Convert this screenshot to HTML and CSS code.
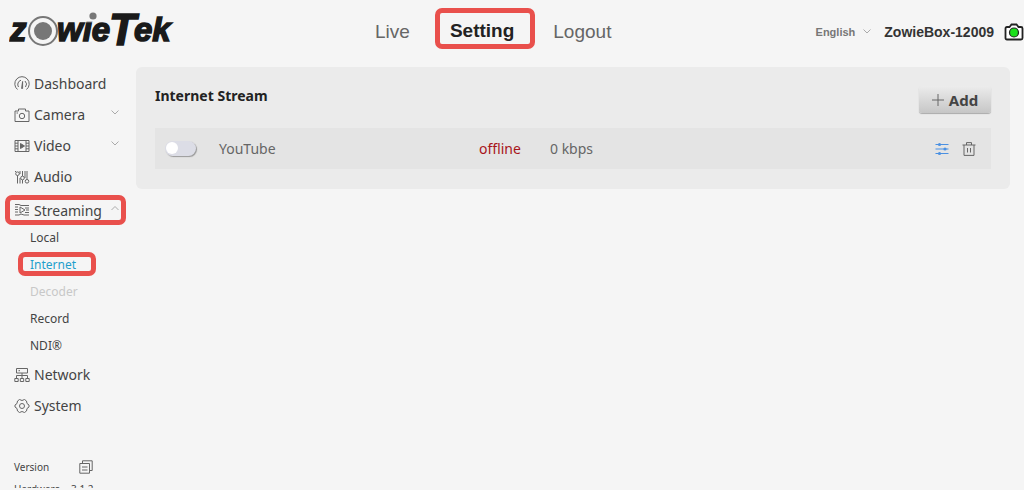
FILE: index.html
```html
<!DOCTYPE html>
<html lang="en">

<head>
    <meta charset="utf-8">
    <title>ZowieTek</title>
    <link rel="stylesheet" href="styles.css">
</head>

<body>
    <header class="header">
        <a class="logo" href="#" aria-label="ZowieTek">
            <svg width="180" height="52" viewBox="0 -7 180 52">
                <g class="logo-text">
                    <text x="1" y="30" font-size="33">z</text>
                    <text x="48" y="30" font-size="33">wie</text>
                    <text x="100" y="34" font-size="44">T</text>
                    <text x="125" y="30" font-size="33">ek</text>
                </g>
                <circle cx="34" cy="20" r="14" fill="#f5f5f5" stroke="#777" stroke-width="2" />
                <circle cx="34" cy="20" r="9" fill="#777" stroke="none" />
                <path d="M77 1H90V10H77Z" fill="#f5f5f5" stroke="none" />
                <circle cx="84" cy="5" r="3.600" fill="#777" stroke="none" />
            </svg>
        </a>
        <nav class="topnav">
            <a href="#">Live</a>
            <a href="#" class="active marked">Setting</a>
            <a href="#">Logout</a>
        </nav>
        <div class="device">
            <button class="lang" type="button">English
                <svg class="arrow" width="8" height="5" viewBox="0 0 8 5"><path d="M.5 .5L4 4L7.500 .5" /></svg>
            </button>
            <span class="device-name">ZowieBox-12009</span>
            <svg class="snapshot" width="20" height="18" viewBox="0 0 20 18">
                <path d="M3 4H5.500L7.500 1.500H12.500L14.500 4H17Q18.500 4 18.500 5.500V15Q18.500 16.500 17 16.500H3Q1.500 16.500 1.500 15V5.500Q1.500 4 3 4Z" fill="#fff" stroke="#222" stroke-width="1.800" />
                <circle cx="10" cy="9.500" r="4.500" fill="#1be01b" stroke="#222" stroke-width="1.200" />
            </svg>
        </div>
    </header>

    <div class="content">
        <aside class="sidebar">
            <ul class="menu">
                <li><a href="#">
                    <svg class="icon" viewBox="0 0 16 16"><path d="M3.500 13.500A7.200 7.200 0 1 1 12.500 13.500M4.500 11A4.500 4.500 0 0 1 7 4.200M11 5A4.500 4.500 0 0 1 11.500 11M7.600 12.500L8.600 5.500V12.500Z" /></svg>
                    Dashboard</a></li>
                <li><a href="#">
                    <svg class="icon" viewBox="0 0 16 16"><path d="M1 4H4.500V2H11.500V4H15V14.500H1Z" /><circle cx="8" cy="9" r="2.700" /><path d="M2.500 6H4" /></svg>
                    Camera
                    <svg class="arrow" width="8" height="5" viewBox="0 0 8 5"><path d="M.5 .5L4 4L7.500 .5" /></svg></a></li>
                <li><a href="#">
                    <svg class="icon" viewBox="0 0 16 16"><path d="M1 2.500H15V13.500H1ZM4 2.500V13.500M12 2.500V13.500M1 5.200H4M1 8H4M1 10.800H4M12 5.200H15M12 8H15M12 10.800H15" /><path d="M6.500 5.500L10.500 8L6.500 10.500Z" fill="#666" /></svg>
                    Video
                    <svg class="arrow" width="8" height="5" viewBox="0 0 8 5"><path d="M.5 .5L4 4L7.500 .5" /></svg></a></li>
                <li><a href="#">
                    <svg class="icon" viewBox="0 0 16 16"><path d="M3.500 6.500V14.500M8.500 2V7M8.500 11V14.500M13 2V10.500M1.500 2V3M6 9V14.500M6 2V5M11 2V9" /><circle cx="3.500" cy="4.700" r="1.800" /><circle cx="8.500" cy="9" r="1.800" /><circle cx="13" cy="12.300" r="1.800" /></svg>
                    Audio</a></li>
                <li><a href="#" class="marked">
                    <svg class="icon" viewBox="0 0 16 16"><path d="M1 2.500H5L7 3.500H15M1 5H4M11 6H15M1 7.500H4M12 8H15M1 10H4M11 10.500H15M1 13H5L7 12L10 13H15M6 5L11 8L6 11Z" /></svg>
                    Streaming
                    <svg class="arrow" width="8" height="5" viewBox="0 0 8 5"><path d="M.5 4L4 .5L7.500 4" /></svg></a>
                    <ul class="submenu">
                        <li><a href="#">Local</a></li>
                        <li><a href="#" class="current marked">Internet</a></li>
                        <li><a href="#" class="disabled">Decoder</a></li>
                        <li><a href="#">Record</a></li>
                        <li><a href="#">NDI®</a></li>
                    </ul>
                </li>
                <li><a href="#">
                    <svg class="icon" viewBox="0 0 16 16"><path d="M2.500 1.500H13.500V6H2.500ZM4.500 3.700H6M8 6V11.500M2.500 11.500V8.500H13.500V11.500M.8 11.500H4.200V14.500H.8ZM6.300 11.500H9.700V14.500H6.300ZM11.800 11.500H15.200V14.500H11.800Z" /></svg>
                    Network</a></li>
                <li><a href="#">
                    <svg class="icon" viewBox="0 0 16 16"><path d="M5.500 1.500L8 2.500L10.500 1.500L12.500 3L13 5.500L15 7V9L13 10.500L12.500 13L10.500 14.500L8 13.500L5.500 14.500L3.500 13L3 10.500L1 9V7L3 5.500L3.500 3Z" /><circle cx="8" cy="8" r="2.500" /></svg>
                    System</a></li>
            </ul>
            <div class="version">
                <span>Version</span>
                <button class="icon-btn" type="button" aria-label="Copy">
                    <svg width="14" height="14" viewBox="0 0 14 14"><path d="M3.500 3.500V.8H13.200V10.500H10.500M.8 3.500H10.500V13.200H.8ZM3 7H8.500M3 10H8.500" /></svg>
                </button>
                <span>Hardware</span>
                <span class="number">3.1.2</span>
            </div>
        </aside>

        <main class="card">
            <div class="card-head">
                <h2>Internet Stream</h2>
                <button class="add" type="button">
                    <svg width="12" height="12" viewBox="0 0 12 12"><path d="M6 0V12M0 6H12" /></svg>
                    Add
                </button>
            </div>
            <table class="streams">
                <tr>
                    <td class="col-switch"><input class="switch" type="checkbox" aria-label="Enable YouTube"></td>
                    <td class="col-name">YouTube</td>
                    <td class="col-status">offline</td>
                    <td>0 kbps</td>
                    <td class="col-tools">
                        <div class="tools">
                            <button class="icon-btn edit" type="button" aria-label="Edit">
                                <svg width="14" height="14" viewBox="0 0 14 14"><path d="M.5 2.500H13.500M.5 7H13.500M.5 11.500H13.500" /><g fill="#4a90e2" stroke="none"><circle cx="4.500" cy="2.500" r="1.600" /><circle cx="10" cy="7" r="1.600" /><circle cx="4.500" cy="11.500" r="1.600" /></g></svg>
                            </button>
                            <button class="icon-btn" type="button" aria-label="Delete">
                                <svg width="14" height="14" viewBox="0 0 14 14"><path d="M.5 3H13.500M4.500 3V.6H9.500V3M2 3V13.400H12V3M5.500 6V10.500M8.500 6V10.500" /></svg>
                            </button>
                        </div>
                    </td>
                </tr>
            </table>
        </main>
    </div>
</body>

</html>
```

FILE: styles.css
```css
* {
    box-sizing: border-box;
}

body {
    display: flex;
    flex-direction: column;
    height: calc(100vh - 2px);
    margin: 0;
    overflow: hidden;
    background: #f5f5f5;
    color: #444;
    font-family: "Noto Sans", "Open Sans", sans-serif;
}

a {
    color: inherit;
    text-decoration: none;
}

button {
    padding: 0;
    border: 0;
    background: none;
    color: inherit;
    font: inherit;
    cursor: pointer;
}

ul {
    margin: 0;
    padding: 0;
    list-style: none;
}

svg {
    flex: none;
    fill: none;
    stroke: #666;
}

/* header */
.header {
    display: grid;
    grid-template-columns: 10fr auto 11fr;
    align-items: center;
    flex: none;
    height: 56px;
    padding-top: 1px;
    font-family: "Liberation Sans", Arial, sans-serif;
}

.logo {
    height: 52px;
    margin: 2px 0 0 9px;
}

.logo-text {
    fill: #1a1a1a;
    stroke: #1a1a1a;
    stroke-width: 1.5;
    font-weight: bold;
    font-style: italic;
}

.topnav {
    display: flex;
    align-items: center;
    gap: 18px;
    padding-bottom: 1px;
    font-size: 19px;
    color: #666;
}

.topnav a {
    padding-top: 6px;
    line-height: 31px;
}

.topnav .active {
    margin-left: 7px;
    padding: 4px 16px 0 10px;
    line-height: 27px;
    color: #222;
    font-weight: bold;
}

.marked {
    border: 5px solid #e9504c;
    border-radius: 7px;
}

.device {
    display: flex;
    align-items: center;
    justify-content: flex-end;
    padding: 6px 0 0;
    font-weight: bold;
}

.lang {
    display: flex;
    align-items: center;
    gap: 8px;
    margin-right: 13px;
    color: #777;
    font-size: 11px;
}

.arrow {
    stroke: #aaa;
}

.device-name {
    margin-right: 10px;
    color: #333;
    font-size: 14px;
}

.content {
    display: flex;
    flex: 1;
    min-height: 0;
}

/* left menu */
.sidebar {
    flex: none;
    width: 136px;
    padding-top: 12px;
}

.menu a {
    display: flex;
    align-items: center;
    height: 31px;
    margin: 0 10px 0 5px;
    padding: 0 5px 0 9px;
    font-size: 14px;
}

.menu .icon {
    width: 16px;
    height: 16px;
    margin-right: 4px;
}

.menu .arrow {
    margin: 0 2px 4px auto;
}

.menu > li > .marked {
    height: 30px;
    margin-top: 3px;
    padding: 0 0 0 4px;
}

.menu .submenu {
    display: grid;
    gap: 3px;
    margin-bottom: 2px;
}

.menu .submenu a {
    height: 24px;
    margin: 0 40px 0 18px;
    padding: 0 0 0 12px;
    font-size: 12px;
}

.menu .submenu .marked {
    padding-left: 7px;
}

.submenu .current {
    color: #1e9fcc;
}

.submenu .disabled {
    color: #c8c8c8;
}

.version {
    display: grid;
    grid-template-columns: 56px auto;
    grid-auto-rows: 22px;
    align-items: center;
    justify-content: start;
    gap: 0 9px;
    margin: 35px 0 0 14px;
    font-size: 10px;
}

.version .number {
    margin-left: -8px;
}

.icon-btn {
    display: flex;
}

/* streams card */
.card {
    flex: 1;
    align-self: flex-start;
    margin: 11px 14px 0 0;
    padding: 19px 19px 20px;
    border-radius: 6px;
    background: #ebebeb;
}

.card-head {
    display: flex;
    align-items: flex-start;
    justify-content: space-between;
    height: 42px;
}

h2 {
    margin: 0;
    color: #222;
    font-size: 14px;
    line-height: 20px;
}

.add {
    display: flex;
    align-items: center;
    justify-content: center;
    gap: 5px;
    width: 72px;
    height: 27px;
    border-radius: 3px;
    background: linear-gradient(#ececec, #c6c6c6);
    box-shadow: 0 1px 1px #aaa;
    font-size: 15px;
    font-weight: bold;
}

.streams {
    width: 100%;
    border-collapse: collapse;
    background: #e4e4e4;
    color: #666;
    font-size: 14px;
}

.streams td {
    height: 41px;
    padding: 0;
}

.streams .col-switch {
    width: 64px;
    padding-left: 10px;
}

.col-name {
    width: 260px;
}

.streams .col-status {
    width: 71px;
    color: #a8141b;
}

.switch {
    display: block;
    appearance: none;
    width: 31px;
    height: 15px;
    margin: 0;
    border-radius: 8px;
    background: #dcdde6;
    box-shadow: 1px 1px 1px #999;
}

.switch::before {
    content: "";
    display: block;
    width: 12px;
    height: 12px;
    margin: 1px;
    border-radius: 50%;
    background: #fff;
}

.switch:checked {
    background: #1e9fcc;
}

.switch:checked::before {
    margin-left: 18px;
}

.tools {
    display: flex;
    justify-content: flex-end;
    gap: 13px;
    padding-right: 15px;
}

.edit svg {
    stroke: #4a90e2;
}
```
